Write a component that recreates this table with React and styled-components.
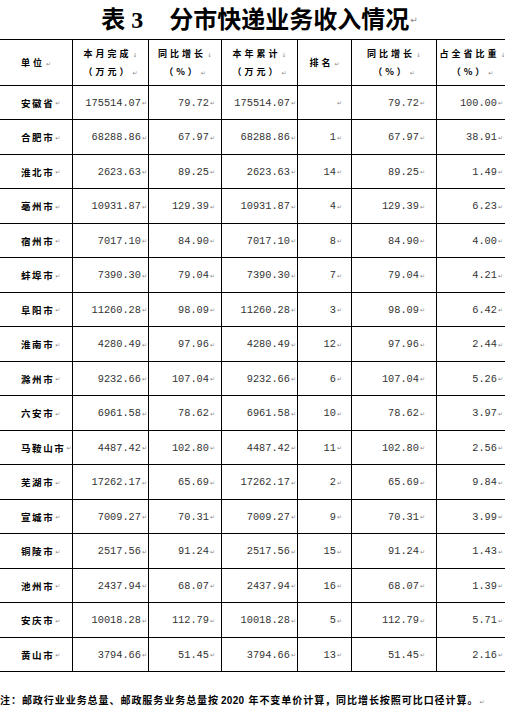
import styled, { createGlobalStyle } from 'styled-components';

// ── Global ───────────────────────────────────────────────────
const Global = createGlobalStyle`
  html, body {
    margin: 0;
    padding: 0;
    background: #fff;
    overflow: hidden;
  }
  body {
    font-family: 'Noto Sans CJK SC', sans-serif;
    color: #000;
  }
`;

// ── Data ─────────────────────────────────────────────────────
const rows = [
  ['安徽省', '175514.07', '79.72', '175514.07', '', '79.72', '100.00'],
  ['合肥市', '68288.86', '67.97', '68288.86', '1', '67.97', '38.91'],
  ['淮北市', '2623.63', '89.25', '2623.63', '14', '89.25', '1.49'],
  ['亳州市', '10931.87', '129.39', '10931.87', '4', '129.39', '6.23'],
  ['宿州市', '7017.10', '84.90', '7017.10', '8', '84.90', '4.00'],
  ['蚌埠市', '7390.30', '79.04', '7390.30', '7', '79.04', '4.21'],
  ['阜阳市', '11260.28', '98.09', '11260.28', '3', '98.09', '6.42'],
  ['淮南市', '4280.49', '97.96', '4280.49', '12', '97.96', '2.44'],
  ['滁州市', '9232.66', '107.04', '9232.66', '6', '107.04', '5.26'],
  ['六安市', '6961.58', '78.62', '6961.58', '10', '78.62', '3.97'],
  ['马鞍山市', '4487.42', '102.80', '4487.42', '11', '102.80', '2.56'],
  ['芜湖市', '17262.17', '65.69', '17262.17', '2', '65.69', '9.84'],
  ['宣城市', '7009.27', '70.31', '7009.27', '9', '70.31', '3.99'],
  ['铜陵市', '2517.56', '91.24', '2517.56', '15', '91.24', '1.43'],
  ['池州市', '2437.94', '68.07', '2437.94', '16', '68.07', '1.39'],
  ['安庆市', '10018.28', '112.79', '10018.28', '5', '112.79', '5.71'],
  ['黄山市', '3794.66', '51.45', '3794.66', '13', '51.45', '2.16'],
];

const headers = [
  ['单位'],
  ['本月完成', '（万元）'],
  ['同比增长', '（%）'],
  ['本年累计', '（万元）'],
  ['排名'],
  ['同比增长', '（%）'],
  ['占全省比重', '（%）'],
];

// right indent of the numbers in each column
const indents = [0, 1, 6, 1, 9, 11, 5];

// ── Layout ───────────────────────────────────────────────────
const Page = styled.div`
  width: 505px;
  height: 721px;
  overflow: hidden;
`;

const Title = styled.h1`
  margin: 0;
  height: 39px;
  display: flex;
  align-items: center;
  justify-content: center;
  padding-left: 14px;
  font-family: 'Liberation Serif', 'Noto Sans CJK SC', serif;
  font-weight: 700;
  font-size: 24px;
  line-height: 30px;
  color: #000;
  white-space: nowrap;
`;

const TitleNo = styled.span`
  margin-right: 26px;
`;

const Mark = styled.span`
  font-family: 'DejaVu Sans', sans-serif;
  font-weight: 400;
  font-size: ${({ $size }) => $size || 6}px;
  color: #8a8a8a;
  letter-spacing: 0;
  margin-left: 1px;
`;

const Grid = styled.div`
  display: grid;
  grid-template-columns: 73px 76px 73px 76px 54px 85px 71px;
  grid-template-rows: ${({ $rows }) => $rows};
  width: 508px;
  border-top: 1px solid #000;
`;

const Cell = styled.div`
  box-sizing: border-box;
  border-bottom: 1px solid #000;
  border-right: ${({ $last }) => ($last ? 'none' : '1px solid #000')};
  display: flex;
  align-items: center;
  overflow: visible;
  white-space: nowrap;
`;

const HeadCell = styled(Cell)`
  flex-direction: column;
  justify-content: center;
  font-size: 9px;
  font-weight: 700;
  letter-spacing: 3px;
  line-height: 17px;
`;

const NameCell = styled(Cell)`
  padding-left: 21px;
  font-size: 9.5px;
  font-weight: 700;
  letter-spacing: 1.6px;
`;

const NumCell = styled(Cell)`
  justify-content: flex-end;
  padding-right: ${({ $indent }) => $indent}px;
  font-family: 'Liberation Mono', 'DejaVu Sans Mono', monospace;
  font-size: 10.3px;
  color: #333;
`;

const Note = styled.p`
  margin: 21px 0 0;
  font-size: 10px;
  font-weight: 700;
  letter-spacing: 0.95px;
  line-height: 14px;
  white-space: nowrap;
`;

const Year = styled.span`
  font-family: 'Liberation Sans', sans-serif;
  letter-spacing: 0.3px;
  margin: 0 4px 0 2px;
`;

// ── Component ────────────────────────────────────────────────
const rowHeights = () => {
  const lines = [39, 85];
  for (let k = 1; k <= rows.length; k++) lines.push(Math.round(85 + (k * 586) / rows.length));
  const h = [];
  for (let i = 1; i < lines.length; i++) h.push(`${lines[i] - lines[i - 1]}px`);
  return h.join(' ');
};

export default function App() {
  return (
    <Page>
      <Global />
      <Title>
        <TitleNo>表 3</TitleNo>
        分市快递业务收入情况
        <Mark $size={9}>↵</Mark>
      </Title>

      <Grid $rows={rowHeights()}>
        {headers.map((lines, i) => (
          <HeadCell key={i} $last={i === headers.length - 1}>
            {lines.map((t, j) => (
              <div key={j}>
                {t}
                <Mark>{j < lines.length - 1 ? '↓' : '↵'}</Mark>
              </div>
            ))}
          </HeadCell>
        ))}

        {rows.map((r, ri) =>
          r.map((v, ci) =>
            ci === 0 ? (
              <NameCell key={`${ri}-${ci}`}>
                {v}
                <Mark>↵</Mark>
              </NameCell>
            ) : (
              <NumCell key={`${ri}-${ci}`} $indent={indents[ci]} $last={ci === r.length - 1}>
                {v}
                <Mark>↵</Mark>
              </NumCell>
            )
          )
        )}
      </Grid>

      <Note>
        注：邮政行业业务总量、邮政服务业务总量按<Year>2020</Year>年不变单价计算，同比增长按照可比口径计算。
        <Mark>↵</Mark>
      </Note>
    </Page>
  );
}
